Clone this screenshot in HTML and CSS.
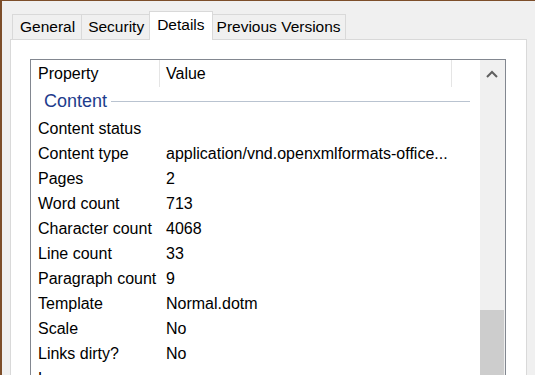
FILE: index.html
```html
<!DOCTYPE html>
<html>
<head>
<meta charset="utf-8">
<link rel="stylesheet" href="styles.css">
</head>
<body>
<div class="window">
  <div class="tabs">
    <div class="tab">General</div>
    <div class="tab">Security</div>
    <div class="tab selected">Details</div>
    <div class="tab">Previous Versions</div>
  </div>
  <div class="panel">
    <div class="listbox">
      <div class="list">
        <div class="header">
          <div class="hcol prop">Property</div>
          <div class="hcol val">Value</div>
          <div class="hcol rest"></div>
        </div>
        <div class="group"><span class="group-name">Content</span><span class="group-line"></span></div>
        <div class="row"><div class="prop">Content status</div><div class="val"></div></div>
        <div class="row"><div class="prop">Content type</div><div class="val">application/vnd.openxmlformats-office...</div></div>
        <div class="row"><div class="prop">Pages</div><div class="val">2</div></div>
        <div class="row"><div class="prop">Word count</div><div class="val">713</div></div>
        <div class="row"><div class="prop">Character count</div><div class="val">4068</div></div>
        <div class="row"><div class="prop">Line count</div><div class="val">33</div></div>
        <div class="row"><div class="prop">Paragraph count</div><div class="val">9</div></div>
        <div class="row"><div class="prop">Template</div><div class="val">Normal.dotm</div></div>
        <div class="row"><div class="prop">Scale</div><div class="val">No</div></div>
        <div class="row"><div class="prop">Links dirty?</div><div class="val">No</div></div>
        <div class="row"><div class="prop">Language</div><div class="val"></div></div>
      </div>
      <div class="scrollbar">
        <div class="arrow">
          <svg width="12" height="8" viewBox="0 0 12 8"><path d="M1 7 L6 2 L11 7" fill="none" stroke="#606060" stroke-width="2"/></svg>
        </div>
        <div class="track"></div>
        <div class="thumb"></div>
      </div>
    </div>
  </div>
</div>
</body>
</html>
```

FILE: styles.css
```css
html, body {
  margin: 0;
  padding: 0;
  height: 375px;
  overflow: hidden;
}
body {
  background: #f0f0f0;
  border-top: 1px solid #7d4e2a;
  border-left: 2px solid #7d4e2a;
  box-sizing: border-box;
  font-family: "Liberation Sans", Arial, sans-serif;
  font-size: 16px;
  color: #000;
}
.window {
  display: flex;
  flex-direction: column;
  height: 600px;
}
.tabs {
  display: flex;
  align-items: flex-end;
  padding-left: 10px;
  margin-top: 9px;
  height: 29px;
  position: relative;
  z-index: 2;
  font-size: 15.5px;
}
.tab {
  height: 24px;
  line-height: 24px;
  padding: 0 5px 0 6px;
  border: 1px solid #d9d9d9;
  border-bottom: none;
  background: #f0f0f0;
  margin-left: -1px;
  white-space: nowrap;
}
.tab:first-child { margin-left: 0; padding: 0 6px 0 7px; }
.tab.selected {
  background: #ffffff;
  height: 28px;
  line-height: 26px;
  margin-bottom: -1px;
  padding: 0 7px 0 7px;
  margin-left: -1px;
  margin-right: -1px;
  position: relative;
  z-index: 3;
}
.tab:last-child { padding: 0 4px 0 5px; }
.panel {
  flex: 1;
  margin: 0 8px 0 8px;
  background: #ffffff;
  border: 1px solid #d9d9d9;
  padding: 19px 20px 0 19px;
  position: relative;
  z-index: 1;
}
.listbox {
  display: flex;
  border: 1px solid #828790;
  height: 500px;
  background: #fff;
}
.list {
  flex: 1;
  display: flex;
  flex-direction: column;
}
.header {
  display: flex;
  height: 27px;
  line-height: 27px;
  flex: none;
}
.hcol {
  white-space: nowrap;
}
.prop {
  width: 122px;
  padding-left: 7px;
  flex: none;
  white-space: nowrap;
}
.val {
  padding-left: 6px;
  white-space: nowrap;
  flex: 1;
}
.header .prop {
  border-right: 1px solid #e5e5e5;
  width: 121px;
}
.header .val {
  flex: none;
  width: 285px;
  border-right: 1px solid #e5e5e5;
}
.header .rest {
  flex: 1;
}
.group {
  height: 29px;
  line-height: 29px;
  display: flex;
  align-items: center;
  padding-left: 13px;
  padding-right: 10px;
  flex: none;
}
.group-name {
  color: #1e3c8c;
  font-size: 18px;
  padding-right: 4px;
}
.group-line {
  flex: 1;
  height: 1px;
  background: #b9c3d0;
  margin-top: -1px;
}
.row {
  display: flex;
  height: 25px;
  line-height: 25px;
  flex: none;
}
.scrollbar {
  width: 25px;
  flex: none;
  background: #f0f0f0;
  display: flex;
  flex-direction: column;
}
.arrow {
  height: 28px;
  flex: none;
  display: flex;
  justify-content: center;
  align-items: center;
  padding-right: 1px;
}
.track {
  height: 222px;
  flex: none;
}
.thumb {
  height: 300px;
  width: 24px;
  flex: none;
  background: #cdcdcd;
}
```
